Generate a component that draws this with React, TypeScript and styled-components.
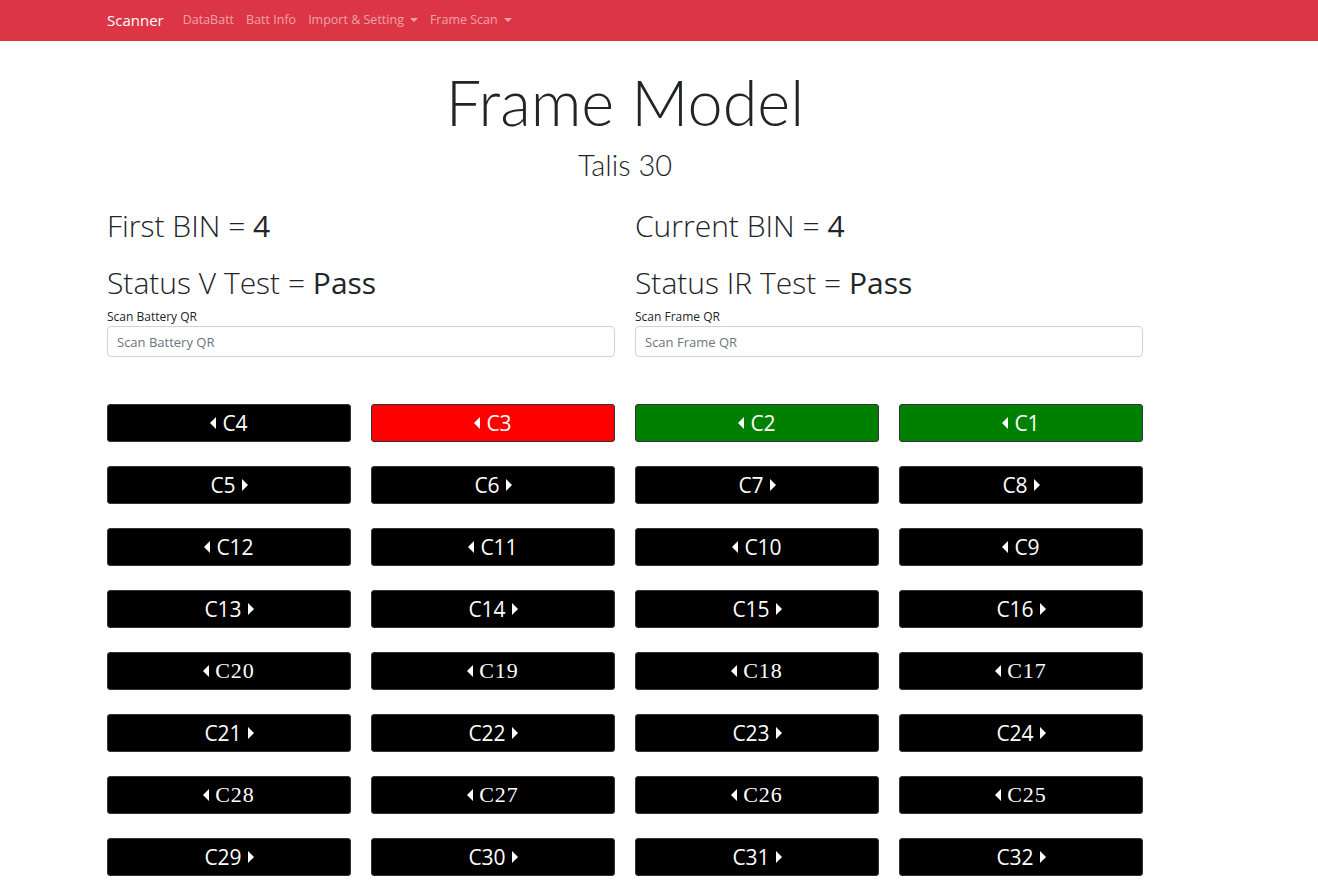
import React from "react";
import styled, { createGlobalStyle } from "styled-components";

const Global = createGlobalStyle`
  html, body { margin: 0; padding: 0; background: #fff; }
  body { font-family: "Open Sans", "Noto Sans", sans-serif; color: #212529; }
  * { box-sizing: border-box; }
`;

const Navbar = styled.nav`
  height: 41px;
  background: #dc3545;
  display: flex;
  align-items: center;
  padding-left: 107px;
  padding-bottom: 2px;
  gap: 19px;
`;

const Brand = styled.span`
  color: #fff;
  font-size: 15px;
`;

const NavLinks = styled.div`
  display: flex;
  align-items: center;
  gap: 12px;
`;

const NavLink = styled.span`
  color: rgba(255, 255, 255, 0.55);
  font-size: 12.5px;
  display: inline-flex;
  align-items: center;
  gap: 6px;
`;

const Caret = styled.span`
  display: inline-block;
  border-top: 4px solid rgba(255, 255, 255, 0.55);
  border-left: 4px solid transparent;
  border-right: 4px solid transparent;
`;

const Page = styled.main`
  width: 1036px;
  margin-left: 107px;
  padding-top: 18px;
`;

const Title = styled.h1`
  margin: 0;
  text-align: center;
  font-family: Lato, "Open Sans", sans-serif;
  font-size: 63px;
  font-weight: 300;
  line-height: 86px;
`;

const Subtitle = styled.h2`
  margin: 1px 0 0;
  text-align: center;
  font-family: Lato, "Open Sans", sans-serif;
  font-size: 29px;
  font-weight: 300;
  line-height: 38px;
`;

const InfoGrid = styled.div`
  display: grid;
  grid-template-columns: 1fr 1fr;
  column-gap: 20px;
  margin-top: 23px;
`;

const InfoLine = styled.div<{ $gap?: number }>`
  font-size: 30px;
  font-weight: 300;
  line-height: 38px;
  margin-top: ${(p) => p.$gap ?? 0}px;
  b { font-weight: 400; }
`;

const Field = styled.div`
  display: flex;
  flex-direction: column;
  margin-top: 7px;
`;

const Label = styled.label`
  font-size: 12px;
  line-height: 16px;
  margin-bottom: 1px;
`;

const Input = styled.input`
  height: 31px;
  border: 1px solid #ced4da;
  border-radius: 4px;
  padding: 0 9px;
  font-family: inherit;
  font-size: 13px;
  color: #495057;
  &::placeholder { color: #6c757d; }
`;

const ButtonGrid = styled.div`
  display: grid;
  grid-template-columns: repeat(4, 1fr);
  column-gap: 20px;
  row-gap: 24px;
  margin-top: 47px;
  padding-bottom: 20px;
`;

const Cell = styled.div<{ $color: string; $serif?: boolean }>`
  height: 38px;
  background: ${(p) => p.$color};
  border: 1px solid #333;
  border-radius: 3px;
  color: #fff;
  display: flex;
  align-items: center;
  justify-content: center;
  gap: 6px;
  font-family: ${(p) => (p.$serif ? '"Liberation Serif", serif' : '"Open Sans", "Noto Sans", sans-serif')};
  font-size: ${(p) => (p.$serif ? 22 : 21)}px;
  letter-spacing: ${(p) => (p.$serif ? 1 : 0)}px;
  line-height: 1;
`;

const Arrow = ({ dir }: { dir: "left" | "right" }) => (
  <svg width="6" height="12" viewBox="0 0 6 12">
    {dir === "left" ? (
      <polygon points="6,0 6,12 0,6" fill="#fff" />
    ) : (
      <polygon points="0,0 0,12 6,6" fill="#fff" />
    )}
  </svg>
);

const colorFor = (n: number) => (n === 3 ? "#ff0000" : n === 2 || n === 1 ? "#008000" : "#000");

export default function App() {
  const rows: number[][] = [];
  for (let r = 0; r < 8; r++) {
    const base = r * 4;
    const nums = [base + 1, base + 2, base + 3, base + 4];
    rows.push(r % 2 === 0 ? nums.reverse() : nums);
  }
  return (
    <>
      <Global />
      <Navbar>
        <Brand>Scanner</Brand>
        <NavLinks>
          <NavLink>DataBatt</NavLink>
          <NavLink>Batt Info</NavLink>
          <NavLink>
            Import &amp; Setting <Caret />
          </NavLink>
          <NavLink>
            Frame Scan <Caret />
          </NavLink>
        </NavLinks>
      </Navbar>
      <Page>
        <Title>Frame Model</Title>
        <Subtitle>Talis 30</Subtitle>
        <InfoGrid>
          <div>
            <InfoLine>
              First BIN = <b>4</b>
            </InfoLine>
            <InfoLine $gap={19}>
              Status V Test = <b>Pass</b>
            </InfoLine>
            <Field>
              <Label>Scan Battery QR</Label>
              <Input placeholder="Scan Battery QR" />
            </Field>
          </div>
          <div>
            <InfoLine>
              Current BIN = <b>4</b>
            </InfoLine>
            <InfoLine $gap={19}>
              Status IR Test = <b>Pass</b>
            </InfoLine>
            <Field>
              <Label>Scan Frame QR</Label>
              <Input placeholder="Scan Frame QR" />
            </Field>
          </div>
        </InfoGrid>
        <ButtonGrid>
          {rows.map((row, ri) =>
            row.map((n) => {
              const left = ri % 2 === 0;
              const serif = ri === 4 || ri === 6;
              return (
                <Cell key={n} $color={colorFor(n)} $serif={serif}>
                  {left && <Arrow dir="left" />}
                  <span>C{n}</span>
                  {!left && <Arrow dir="right" />}
                </Cell>
              );
            })
          )}
        </ButtonGrid>
      </Page>
    </>
  );
}
